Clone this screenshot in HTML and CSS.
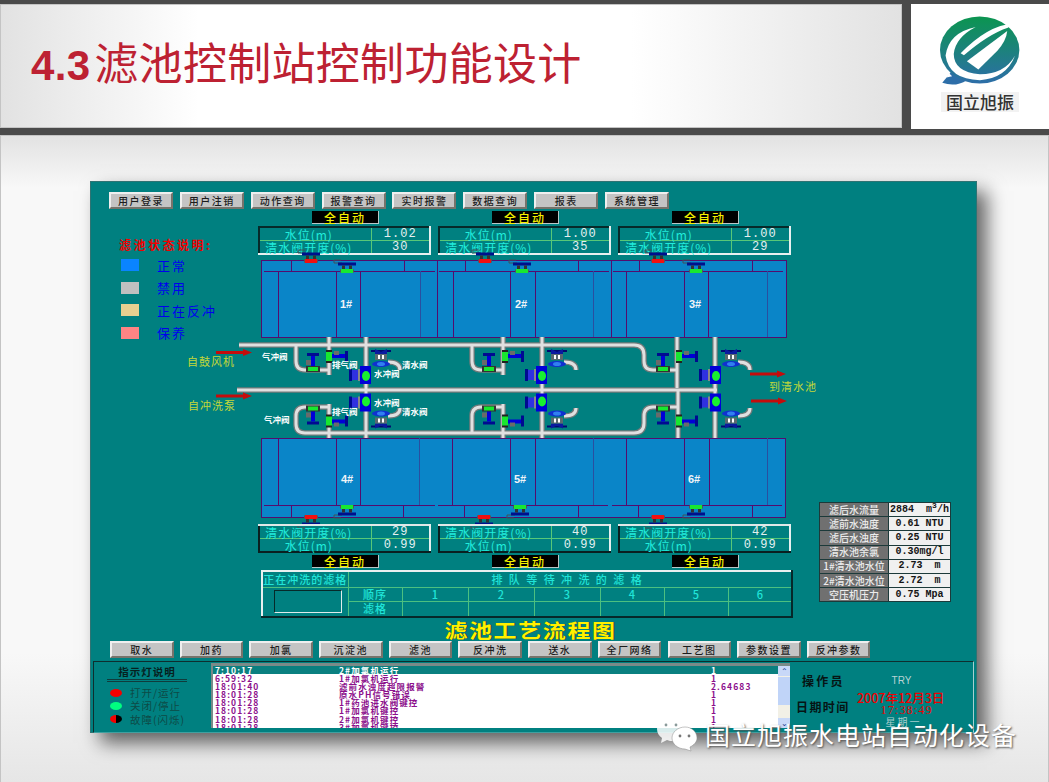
FILE: index.html
```html
<!DOCTYPE html>
<html lang="zh-CN">
<head>
  <meta charset="UTF-8" />
  <title>4.3滤池控制站控制功能设计</title>
  <link rel="stylesheet" href="styles.css">
</head>
<body>
  <div class="slideHead">
    <div class="titleBar">
      <h1><b>4.3</b>滤池控制站控制功能设计</h1>
    </div>
    <div class="logoBox">
      <svg class="logoMark" viewBox="120 45 250 215">
        <defs>
          <linearGradient id="logoGrad" x1="0" y1="0" x2="0" y2="1">
            <stop offset="0" stop-color="#0b9550" />
            <stop offset="1" stop-color="#2d6ea8" />
          </linearGradient>
        </defs>
        <path d="M165 205 L130 248 Q170 262 205 240 Z" fill="#2d6ea8" />
        <ellipse cx="244" cy="148" rx="121" ry="102" fill="url(#logoGrad)" />
        <path d="M232 78 Q150 95 140 165 Q150 238 245 240 Q325 235 352 165 Q320 222 245 222 Q165 215 165 160 Q170 110 232 78 Z" fill="#fff" />
        <path d="M345 68 Q270 72 186 158 L196 164 Q270 100 330 80 Z" fill="#fff" />
        <path d="M328 90 L205 182 L240 207 L298 150 Q325 120 328 90 Z" fill="#fff" />
        <path d="M150 218 L143 232 L160 228 Z" fill="#fff" />
      </svg>
      <div class="logoText">国立旭振</div>
    </div>
  </div>

  <div class="slideBody">
    <div class="hmi">
      <div class="toolbar topBar">
        <button>用户登录</button>
        <button>用户注销</button>
        <button>动作查询</button>
        <button>报警查询</button>
        <button>实时报警</button>
        <button>数据查询</button>
        <button>报表</button>
        <button>系统管理</button>
      </div>

      <div class="schematic">
        <div class="filterRow">
          <div class="filterCol">
            <div class="mode">全自动</div>
            <table class="readout">
              <tr><td>水位(m)</td><td>1.02</td></tr>
              <tr><td>清水阀开度(%)</td><td>30</td></tr>
            </table>
          </div>
          <div class="filterCol">
            <div class="mode">全自动</div>
            <table class="readout">
              <tr><td>水位(m)</td><td>1.00</td></tr>
              <tr><td>清水阀开度(%)</td><td>35</td></tr>
            </table>
          </div>
          <div class="filterCol">
            <div class="mode">全自动</div>
            <table class="readout">
              <tr><td>水位(m)</td><td>1.00</td></tr>
              <tr><td>清水阀开度(%)</td><td>29</td></tr>
            </table>
          </div>
        </div>

        <svg class="flowDiagram" viewBox="91 253 885 271">
          <defs>
            <g id="tankValve">
              <path d="M-5 -1 H-13 V-4 H-6" fill="none" stroke="#40505a" stroke-width="1" />
              <rect x="-9" y="-1.5" width="18" height="3" fill="#00108c" />
              <rect x="-5" y="1.5" width="3" height="4" fill="#333" />
              <rect x="2" y="1.5" width="3" height="4" fill="#333" />
              <rect x="-7" y="5.5" width="14" height="3" fill="#555" />
              <rect x="-6" y="5" width="12" height="4" />
            </g>
            <g id="valveSet">
              <!-- air valve -->
              <rect x="307" y="353" width="12" height="3" fill="#000a90" />
              <rect x="311" y="356" width="4" height="11" fill="#0000d8" />
              <rect x="306" y="360" width="5" height="5" fill="#6a6a6a" />
              <rect x="306" y="366" width="14" height="6" fill="#333" />
              <rect x="308" y="367" width="10" height="4" fill="#18e830" />
              <!-- exhaust valve -->
              <rect x="326" y="350" width="6" height="13" fill="#222" />
              <rect x="326" y="352" width="6" height="9" fill="#18e830" />
              <rect x="332" y="354" width="13" height="4" fill="#0000d8" />
              <rect x="345" y="351" width="3" height="11" fill="#000a90" />
              <rect x="334" y="351" width="5" height="4" fill="#6a6a6a" />
              <!-- water valve -->
              <rect x="349" y="369" width="3" height="12" fill="#000a90" />
              <rect x="352" y="370" width="6" height="10" fill="#3030e0" />
              <rect x="358" y="369" width="2" height="12" fill="#888" />
              <rect x="360" y="366" width="11" height="18" fill="#0000d8" />
              <ellipse cx="366" cy="376" rx="4" ry="5" fill="#18f030" />
              <!-- clear water valve -->
              <rect x="371" y="350" width="20" height="2" fill="#000a70" />
              <path d="M375 349 L381 352 L387 349 V354 H375 Z" fill="#0a1aa0" />
              <rect x="375" y="354" width="12" height="6" fill="#5a6a70" />
              <rect x="378" y="355" width="2" height="4" fill="#fff" />
              <rect x="382" y="355" width="2" height="4" fill="#fff" />
              <ellipse cx="381" cy="364" rx="9" ry="3" fill="#1030d0" />
              <ellipse cx="381" cy="364" rx="4" ry="2" fill="#3080f0" />
            </g>
            <path id="pipeRun" d="M239 345 H634 Q644 345 644 355 V361 Q644 370 653 370 H677 M296 345 V361 Q296 370 305 370 H329 M472 345 V361 Q472 370 481 370 H503 M237 390 H717 M329 407 H305 Q296 407 296 416 V424 Q296 433 305 433 H634 Q644 433 644 423 V416 Q644 407 653 407 H678 M503 407 H481 Q472 407 472 416 V433 M329 337 V375 M503 337 V375 M677 337 V388 M329 404 V438 M503 404 V438 M678 390 V438 M366 337 V438 M542 337 V438 M715 337 V438 M388 362 Q400 362 400 370 M388 416 Q400 416 400 408 M564 362 Q576 362 576 370 M564 416 Q576 416 576 408 M738 362 Q750 362 750 370 M738 416 Q750 416 750 408" fill="none" />
          </defs>

          <!-- upper filters -->
          <rect class="tank" x="261" y="260" width="525" height="77" />
          <path class="tankLine" d="M437 260 V337 M611 260 V337 M264 271 H435 M439 271 H609 M613 271 H783 M291 260 V271 M404 260 V271 M465 260 V271 M578 260 V271 M639 260 V271 M752 260 V271 M278 271 V337 M336 271 V337 M360 271 V337 M453 271 V337 M510 271 V337 M535 271 V337 M626 271 V337 M684 271 V337 M708 271 V337" />
          <path class="tankLineSoft" d="M420 271 V337 M593 271 V337 M767 271 V337" />
          <!-- lower filters -->
          <rect class="tank" x="261" y="438" width="524" height="79" />
          <path class="tankLine" d="M264 505 H435 M438 505 H608 M612 505 H782 M291 505 V517 M403 505 V517 M464 505 V517 M578 505 V517 M638 505 V517 M752 505 V517 M278 438 V505 M336 438 V505 M360 438 V505 M452 438 V505 M510 438 V505 M535 438 V505 M626 438 V505 M684 438 V505 M709 438 V505" />
          <path class="tankLineSoft" d="M419 438 V505 M593 438 V505 M767 438 V505" />

          <text class="tankName" x="340" y="308">1#</text>
          <text class="tankName" x="515" y="308">2#</text>
          <text class="tankName" x="689" y="308">3#</text>
          <text class="tankName" x="341" y="483">4#</text>
          <text class="tankName" x="514" y="483">5#</text>
          <text class="tankName" x="688" y="483">6#</text>

          <use href="#tankValve" class="shut" transform="translate(311 254)" />
          <use href="#tankValve" class="open" transform="translate(347 264)" />
          <use href="#tankValve" class="shut" transform="translate(485 254)" />
          <use href="#tankValve" class="open" transform="translate(522 264)" />
          <use href="#tankValve" class="shut" transform="translate(658 254)" />
          <use href="#tankValve" class="open" transform="translate(696 264)" />
          <use href="#tankValve" class="open" transform="translate(347 514) scale(1 -1)" />
          <use href="#tankValve" class="shut" transform="translate(311 524) scale(1 -1)" />
          <use href="#tankValve" class="open" transform="translate(520 514) scale(1 -1)" />
          <use href="#tankValve" class="shut" transform="translate(484 524) scale(1 -1)" />
          <use href="#tankValve" class="open" transform="translate(696 514) scale(1 -1)" />
          <use href="#tankValve" class="shut" transform="translate(658 524) scale(1 -1)" />

          <use href="#pipeRun" class="pipeEdge" />
          <use href="#pipeRun" class="pipeCore" />

          <use href="#valveSet" />
          <use href="#valveSet" transform="translate(176 0)" />
          <use href="#valveSet" transform="translate(350 0)" />
          <use href="#valveSet" transform="translate(0 777.5) scale(1 -1)" />
          <use href="#valveSet" transform="translate(176 777.5) scale(1 -1)" />
          <use href="#valveSet" transform="translate(350 777.5) scale(1 -1)" />

          <path class="arrow" d="M216 351 H243 V349 L252 352.5 L243 356 V354 H216 Z M216 394.5 H243 V392.5 L252 396 L243 399.5 V397.5 H216 Z M750 372.5 H777 V370.5 L786 374 L777 377.5 V375.5 H750 Z M751 399.5 H778 V397.5 L787 401 L778 404.5 V402.5 H751 Z" />

          <text class="feed" x="187" y="366">自鼓风机</text>
          <text class="feed" x="188" y="410">自冲洗泵</text>
          <text class="feed" x="769" y="391">到清水池</text>

          <text class="tag" x="262" y="360">气冲阀</text>
          <text class="tag" x="332" y="368">排气阀</text>
          <text class="tag" x="374" y="377">水冲阀</text>
          <text class="tag" x="402" y="368">清水阀</text>
          <text class="tag" x="264" y="423">气冲阀</text>
          <text class="tag" x="332" y="415">排气阀</text>
          <text class="tag" x="374" y="406">水冲阀</text>
          <text class="tag" x="402" y="415">清水阀</text>
        </svg>

        <div class="filterRow footRow">
          <div class="filterCol">
            <table class="readout">
              <tr><td>清水阀开度(%)</td><td>29</td></tr>
              <tr><td>水位(m)</td><td>0.99</td></tr>
            </table>
            <div class="mode">全自动</div>
          </div>
          <div class="filterCol">
            <table class="readout">
              <tr><td>清水阀开度(%)</td><td>40</td></tr>
              <tr><td>水位(m)</td><td>0.99</td></tr>
            </table>
            <div class="mode">全自动</div>
          </div>
          <div class="filterCol">
            <table class="readout">
              <tr><td>清水阀开度(%)</td><td>42</td></tr>
              <tr><td>水位(m)</td><td>0.99</td></tr>
            </table>
            <div class="mode">全自动</div>
          </div>
        </div>

        <table class="queue">
          <colgroup>
            <col class="colNow"><col class="colLabel">
            <col class="colWide"><col class="colWide"><col class="colWide">
            <col class="colMid"><col class="colMid"><col class="colMid">
          </colgroup>
          <tr class="queueHead">
            <td class="queueNow">正在冲洗的滤格</td>
            <td colspan="7" class="queueWait">排队等待冲洗的滤格</td>
          </tr>
          <tr class="queueOrder">
            <td rowspan="2"><div class="queueBox"></div></td>
            <td class="queueLabel">顺序</td>
            <td>1</td><td>2</td><td>3</td><td>4</td><td>5</td><td>6</td>
          </tr>
          <tr class="queueCells">
            <td class="queueLabel">滤格</td>
            <td></td><td></td><td></td><td></td><td></td><td></td>
          </tr>
        </table>

        <div class="planTitle">滤池工艺流程图</div>

        <div class="stateLegend">
          <div class="stateTitle">滤池状态说明:</div>
          <div class="stateRow"><span class="swatch normal"></span>正常</div>
          <div class="stateRow"><span class="swatch disabled"></span>禁用</div>
          <div class="stateRow"><span class="swatch flushing"></span>正在反冲</div>
          <div class="stateRow"><span class="swatch service"></span>保养</div>
        </div>

        <table class="stats">
          <tr><th>滤后水流量</th><td>2884 &nbsp;m<sup>3</sup>/h</td></tr>
          <tr><th>滤前水浊度</th><td>0.61 NTU</td></tr>
          <tr><th>滤后水浊度</th><td>0.25 NTU</td></tr>
          <tr><th>清水池余氯</th><td>0.30mg/l</td></tr>
          <tr><th>1#清水池水位</th><td>2.73 &nbsp;m</td></tr>
          <tr><th>2#清水池水位</th><td>2.72 &nbsp;m</td></tr>
          <tr><th>空压机压力</th><td>0.75 Mpa</td></tr>
        </table>
      </div>

      <div class="toolbar lowBar">
        <button>取水</button>
        <button>加药</button>
        <button>加氯</button>
        <button>沉淀池</button>
        <button>滤池</button>
        <button>反冲洗</button>
        <button>送水</button>
        <button>全厂网络</button>
        <button>工艺图</button>
        <button>参数设置</button>
        <button>反冲参数</button>
      </div>

      <div class="statusPanel">
        <div class="lampKey">
          <div class="lampTitle">指示灯说明</div>
          <div class="lampRow"><span class="lamp red"></span>打开/运行</div>
          <div class="lampRow"><span class="lamp green"></span>关闭/停止</div>
          <div class="lampRow"><span class="lamp fault"></span>故障(闪烁)</div>
        </div>

        <div class="eventList">
          <div class="eventRows">
            <div class="eventRow current"><span>7:10:17</span><span>2#加氯机运行</span><span>1</span></div>
            <div class="eventRow"><span>6:59:32</span><span>1#加氯机运行</span><span>1</span></div>
            <div class="eventRow"><span>18:01:40</span><span>滤前水浊度超限报警</span><span>2.64683</span></div>
            <div class="eventRow"><span>18:01:28</span><span>原水PH信号错误</span><span>1</span></div>
            <div class="eventRow"><span>18:01:28</span><span>1#药池进水阀键控</span><span>1</span></div>
            <div class="eventRow"><span>18:01:28</span><span>1#加氯机键控</span><span>1</span></div>
            <div class="eventRow"><span>18:01:28</span><span>2#加氯机键控</span><span>1</span></div>
            <div class="eventRow"><span>18:01:28</span><span>3#加氯机键控</span><span>1</span></div>
          </div>
          <div class="scrollBar">
            <span class="scrollBtn">⌃</span>
            <span class="scrollThumb"></span>
            <span class="scrollBtn">⌄</span>
          </div>
        </div>

        <div class="sessionInfo">
          <div class="operatorRow"><span class="infoLabel">操作员</span><span class="operator">TRY</span></div>
          <div class="clockRow">
            <span class="infoLabel clockLabel">日期时间</span>
            <div class="clock">
              <div class="clockDate">2007年12月3日</div>
              <div class="clockTime">17:38:49</div>
              <div class="clockDay">星期一</div>
            </div>
          </div>
        </div>
      </div>
    </div>

    <div class="watermark">
      <svg class="wechat" viewBox="0 0 42 36">
        <path d="M15 1 C7 1 1 6 1 13 C1 17 3 20 6 22 L5 27 L11 24 C13 25 15 25 17 25 C24 25 29 19 29 13 C29 6 23 1 15 1 Z" fill="#fff" fill-opacity="0.85" />
        <circle cx="10" cy="9" r="1.4" fill="#8a9a9a" />
        <circle cx="20" cy="9" r="1.4" fill="#8a9a9a" />
        <path d="M29 11 C22 11 16 16 16 22 C16 28 22 33 29 33 L35 35 L34 31 C38 29 41 26 41 22 C41 16 36 11 29 11 Z" fill="#fff" stroke="#888" stroke-width="0.5" />
        <circle cx="24" cy="20" r="1.4" fill="#777" />
        <circle cx="33" cy="20" r="1.4" fill="#777" />
      </svg>
      <span>国立旭振水电站自动化设备</span>
    </div>
  </div>
</body>
</html>
```

FILE: styles.css
```css
* {
  margin: 0;
  padding: 0;
  box-sizing: border-box;
}

html, body {
  height: 782px;
  overflow: hidden;
}

body {
  background-color: #4a4a4a;
  font-family: "Noto Sans CJK SC", "Liberation Sans", sans-serif;
}

/* slide header */
.slideHead {
  display: flex;
  height: 135px;
  padding-top: 4px;
}

.titleBar {
  width: 902px;
  height: 124px;
  border: 1px solid #c4c4c4;
  background: linear-gradient(90deg, #e2e2e2, #fff 22%, #fff 70%, #e2e2e2);
  display: flex;
  align-items: center;
  padding: 0 0 6px 30px;
}

.titleBar h1 {
  color: #bd2132;
  font-size: 44px;
  font-weight: 400;
  line-height: 50px;
  letter-spacing: .3px;
  white-space: nowrap;
}

.titleBar b {
  font-family: "Liberation Sans", sans-serif;
  font-weight: 700;
  font-size: 42px;
  margin-right: 4px;
}

.logoBox {
  width: 138px;
  height: 125px;
  margin-left: 9px;
  background-color: #fff;
  display: flex;
  flex-direction: column;
  align-items: center;
  padding-top: 12px;
}

.logoMark {
  width: 82px;
  height: 71px;
  display: block;
}

.logoText {
  margin-top: 5px;
  width: 78px;
  text-align: center;
  background-color: #f2f2f2;
  color: #333;
  font-size: 17px;
  font-weight: 500;
  line-height: 20px;
}

/* slide body */
.slideBody {
  position: relative;
  height: 647px;
  padding: 45px 0 0 90px;
  border: 1px solid #c4c4c4;
  border-bottom: 0;
  background: linear-gradient(180deg, #e2e2e2, #f8f8f8 8%, #f8f8f8 80%, #e6e6e6);
}

.hmi {
  width: 887px;
  height: 552px;
  margin-left: -1px;
  background-color: #008080;
  border: 1px solid #2f7373;
  box-shadow: 10px 10px 18px rgba(0, 0, 0, 0.6);
}

.toolbar {
  display: flex;
  height: 17px;
}

.toolbar button {
  flex: none;
  height: 17px;
  background-color: #c4c4c4;
  border: 2px solid;
  border-color: #efefef #77736b #77736b #efefef;
  color: #1c1c1c;
  font-family: "Noto Sans CJK SC", sans-serif;
  font-size: 10px;
  font-weight: 500;
  line-height: 12px;
  letter-spacing: 1.5px;
}

.topBar {
  margin-top: 10px;
  padding-left: 18px;
  gap: 6.86px;
}

.topBar button {
  width: 64px;
}

.lowBar {
  padding-left: 19px;
  gap: 6.2px;
}

.lowBar button {
  width: 63.5px;
}

.schematic {
  position: relative;
  height: 430px;
}

.filterRow {
  display: flex;
  gap: 7px;
  margin: 2px 0 0 167px;
  height: 42px;
}

.footRow {
  margin-top: 0;
  height: 43px;
}

.filterCol {
  width: 173px;
  display: flex;
  flex-direction: column;
}

.mode {
  width: 67px;
  height: 13px;
  margin-left: 54px;
  background-color: #000;
  border-right: 1px solid #b8c8c8;
  border-bottom: 1px solid #b8c8c8;
  color: #f4f000;
  font-size: 12px;
  font-weight: 500;
  line-height: 13px;
  letter-spacing: 2px;
  text-align: center;
}

.readout {
  width: 173px;
  height: 27px;
  margin-top: 2px;
  border-collapse: collapse;
  border: 2px solid;
  border-color: #062a2a #e8f0f0 #e8f0f0 #062a2a;
  table-layout: fixed;
}

.footRow .readout {
  height: 28px;
  margin-top: 0;
  border-color: #e0e8e8 #e8f0f0 #0a2020 #0a2020;
}

.footRow .mode {
  margin-top: 2px;
}

.readout td {
  border: 1px solid #58c878;
  padding: 0;
  height: 12px;
  font-size: 12px;
  line-height: 11px;
  letter-spacing: 1px;
  text-align: center;
  color: #20ecdc;
  white-space: nowrap;
}

.readout td:first-child {
  width: 112px;
  padding-right: 13px;
}

.readout td:last-child {
  padding-top: 1px;
  font-family: "Liberation Mono", monospace;
  color: #e4f0f0;
}

.flowDiagram {
  display: block;
  width: 885px;
  height: 271px;
  overflow: visible;
}

.tank {
  fill: #0a85c8;
  stroke: #540c6e;
  stroke-width: 1;
  shape-rendering: crispEdges;
}

.tankLine {
  fill: none;
  stroke: #540c6e;
  stroke-width: 1;
  shape-rendering: crispEdges;
}

.tankLineSoft {
  fill: none;
  stroke: #2a4fa0;
  stroke-width: 1;
  shape-rendering: crispEdges;
}

.tankName {
  fill: #f0f4f8;
  font-family: "Liberation Sans", sans-serif;
  font-size: 11px;
  font-weight: 700;
}

.shut { fill: #f01010; }
.open { fill: #18e830; }

.pipeEdge {
  stroke: #727a7a;
  stroke-width: 5.5;
}

.pipeCore {
  stroke: #e0e0e0;
  stroke-width: 3;
}

.arrow {
  fill: #c40c0c;
}

.feed {
  fill: #c4d838;
  font-size: 11px;
  letter-spacing: 1px;
}

.tag {
  fill: #fff;
  font-size: 8.5px;
  font-weight: 700;
}

.queue {
  width: 528px;
  height: 48px;
  margin: 3px 0 0 170px;
  border-collapse: collapse;
  border: 2px solid;
  border-color: #e8f0f0 #06282a #06282a #e8f0f0;
  table-layout: fixed;
  color: #20e4d8;
  font-size: 11px;
  text-align: center;
}

.colNow { width: 86px; }
.colLabel { width: 54px; }
.colWide { width: 66px; }
.colMid { width: 64px; }

.queue td {
  border: 1px solid #4cc080;
  padding: 0;
  line-height: 11px;
}

.queueHead td {
  height: 16px;
}

.queueOrder td {
  height: 14px;
  font-weight: 500;
}

.queueCells td {
  height: 16px;
}

.queueNow {
  font-weight: 500;
  letter-spacing: 1px;
  white-space: nowrap;
}

.queueWait {
  font-weight: 500;
  letter-spacing: 6.4px;
}

.queueLabel {
  font-weight: 500;
  letter-spacing: 1px;
}

.queueBox {
  width: 68px;
  height: 23px;
  margin-left: 11px;
  border: 1px solid;
  border-color: #062a2a #e0ecec #e0ecec #062a2a;
}

.planTitle {
  margin-top: 2px;
  padding-right: 6px;
  height: 19px;
  color: #fff000;
  font-size: 23px;
  font-weight: 700;
  line-height: 19px;
  letter-spacing: 1.6px;
  text-align: center;
  text-shadow: 1px 1px 0 #1a3a20;
  white-space: nowrap;
  transform: scaleY(.85);
}

.stateLegend {
  position: absolute;
  left: 28px;
  top: 26px;
}

.stateTitle {
  color: #f00000;
  font-size: 12px;
  font-weight: 700;
  line-height: 16px;
  letter-spacing: 2.5px;
  margin-bottom: 6px;
}

.stateRow {
  display: flex;
  align-items: center;
  gap: 18px;
  height: 12px;
  margin: 0 0 10.6px 2px;
  color: #0000ee;
  font-size: 13px;
  letter-spacing: 2px;
  white-space: nowrap;
}

.swatch {
  width: 18px;
  height: 12px;
}

.swatch.normal { background-color: #0a84ff; }
.swatch.disabled { background-color: #c0c0c0; }
.swatch.flushing { background-color: #e8d090; }
.swatch.service { background-color: #ff8484; }

.stats {
  position: absolute;
  left: 728px;
  top: 291px;
  width: 132px;
  border-collapse: collapse;
  border: 1px solid #1c3a3a;
}

.stats th, .stats td {
  height: 14.2px;
  border: 1px solid #1c3a3a;
  padding: 0;
  line-height: 12px;
  white-space: nowrap;
}

.stats th {
  width: 69px;
  background-color: #707070;
  color: #ececec;
  font-size: 10px;
  font-weight: 500;
}

.stats td {
  background-color: #f0f0f0;
  color: #151515;
  font-family: "Liberation Mono", monospace;
  font-size: 10px;
  font-weight: 700;
  text-align: center;
}

.stats sup {
  font-size: 8px;
  line-height: 0;
}

/* bottom status area */
.statusPanel {
  display: flex;
  width: 881px;
  height: 72px;
  margin: 3px 0 0 2px;
  border-top: 1px solid #0e2e2e;
  border-left: 1px solid #0e2e2e;
  border-right: 1px solid #a8d0d0;
  border-bottom: 1px solid #40a0a0;
}

.lampKey {
  width: 117px;
  flex: none;
  padding: 3px 0 0 13px;
}

.lampTitle {
  width: 80px;
  padding-bottom: 1px;
  border-bottom: 3px double #103c3c;
  color: #06201e;
  font-size: 10.5px;
  font-weight: 700;
  line-height: 13px;
  letter-spacing: 1px;
  text-align: center;
  margin-bottom: 4px;
}

.lampRow {
  display: flex;
  align-items: center;
  gap: 8px;
  height: 13.3px;
  margin-left: 3px;
  color: #0e4a46;
  font-size: 10.5px;
  letter-spacing: 1px;
  white-space: nowrap;
}

.lamp {
  width: 12px;
  height: 8px;
  border-radius: 50%;
}

.lamp.red { background-color: #f40000; }
.lamp.green { background-color: #00ff80; }
.lamp.fault { background: linear-gradient(90deg, #f40000 50%, #000 50%); }

.eventList {
  width: 579px;
  flex: none;
  height: 65px;
  margin-top: 1px;
  border-top: 3px solid #7a8a88;
  border-left: 2px solid #7a8a88;
  background-color: #fff;
  display: flex;
}

.eventRows {
  flex: 1;
  height: 64px;
  margin-top: -2px;
  padding-top: 2px;
  overflow: hidden;
}

.eventRow {
  display: grid;
  grid-template-columns: 124px 372px 1fr;
  height: 8.1px;
  padding-left: 2px;
  color: #8c108c;
  font-size: 8.5px;
  font-weight: 700;
  line-height: 8.1px;
  letter-spacing: 1.1px;
  white-space: nowrap;
}

.eventRow.current {
  background-color: #0a8080;
  color: #fff;
}

.scrollBar {
  width: 12px;
  flex: none;
  background-color: #f2f0e6;
  display: flex;
  flex-direction: column;
  align-items: stretch;
}

.scrollBtn {
  height: 10px;
  background-color: #c8d8f8;
  color: #1a3a8a;
  font-size: 8px;
  line-height: 10px;
  text-align: center;
  overflow: hidden;
}

.scrollThumb {
  height: 28px;
  margin-top: 1px;
  background-color: #c0d4f8;
  margin-bottom: auto;
}

.sessionInfo {
  flex: 1;
  padding: 8px 0 0 6px;
}

.infoLabel {
  color: #061414;
  font-size: 12px;
  font-weight: 700;
  letter-spacing: 1.4px;
  white-space: nowrap;
}

.operatorRow {
  display: flex;
  align-items: center;
  height: 20px;
  padding-left: 6px;
  gap: 47px;
}

.operatorRow .infoLabel {
  letter-spacing: 2.2px;
}

.operator {
  color: #b8d4d4;
  font-family: "Liberation Sans", sans-serif;
  font-size: 10px;
}

.clockRow {
  display: flex;
  align-items: center;
  height: 40px;
}

.clockLabel {
  margin-bottom: 8px;
}

.clock {
  width: 92px;
  margin-left: 5px;
  text-align: center;
  font-size: 12.5px;
  line-height: 12px;
  color: #f00000;
  white-space: nowrap;
}

.clockDate {
  font-weight: 500;
}

.clockTime {
  font-family: "Liberation Serif", serif;
  font-size: 12px;
  letter-spacing: 1.2px;
  padding-left: 12px;
}

.clockDay {
  color: #a8cccc;
  font-size: 10px;
  letter-spacing: 2px;
  padding-left: 6px;
}

/* wechat source mark over the slide */
.watermark {
  position: absolute;
  left: 655px;
  top: 580px;
  display: flex;
  align-items: center;
  gap: 7px;
  color: #fff;
  font-size: 25px;
  letter-spacing: 1px;
  line-height: 34px;
  text-shadow: 1px 1px 2px #555;
  white-space: nowrap;
}

.wechat {
  width: 42px;
  height: 36px;
}
```
